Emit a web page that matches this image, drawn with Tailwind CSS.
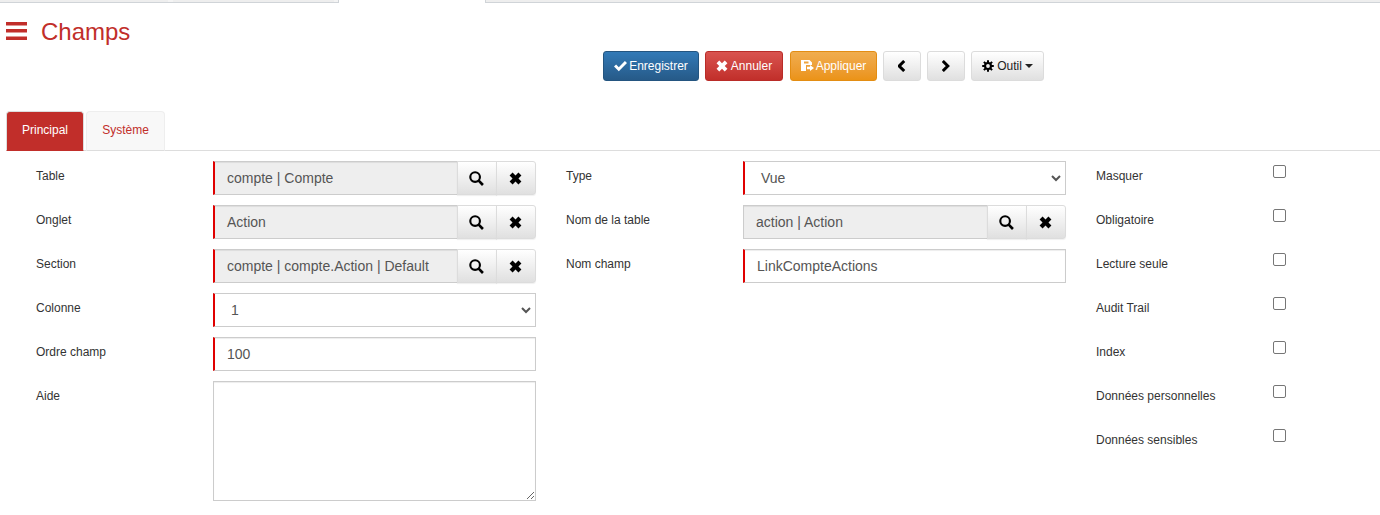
<!DOCTYPE html>
<html lang="fr">
<head>
  <meta charset="UTF-8" />
  <title>Champs</title>
  <script src="https://cdn.jsdelivr.net/npm/@tailwindcss/browser@4"></script>
</head>
<body class="bg-white font-['Liberation_Sans',Arial,sans-serif] text-[12px] text-[#333] h-[515px] overflow-hidden">
  <!-- onglets du navigateur -->
  <div class="h-[3px] flex">
    <div class="w-[168px] bg-[#eeeeee] border-b border-[#d0d4d8]"></div>
    <div class="w-[5px] bg-[#f4f4f4] border-b border-[#d0d4d8]"></div>
    <div class="w-[161px] bg-[#eeeeee] border-b border-[#d0d4d8]"></div>
    <div class="w-[5px] bg-[#f4f4f4] border-b border-r border-[#d0d4d8]"></div>
    <div class="w-[146px]"></div>
    <div class="flex-1 bg-[#eeeeee] border-b border-l border-[#d0d4d8]"></div>
  </div>

  <!-- titre -->
  <div class="h-[48px] flex items-start pl-[6px] pt-[19px]">
    <svg class="w-[21px] h-[18px] fill-[#c12e2a]" viewBox="0 0 21 18"><rect width="21" height="3.5"/><rect y="7" width="21" height="3.5"/><rect y="14.5" width="21" height="3.5"/></svg>
    <h1 class="ml-[14px] text-[24px] leading-[26px] text-[#c12e2a] -mt-[3px]">Champs</h1>
  </div>

  <!-- barre d'actions -->
  <div class="h-[30px] flex pl-[603px]">
    <button class="w-[96px] h-[30px] rounded-[3px] border border-[#245580] bg-gradient-to-b from-[#337ab7] to-[#265a88] text-white flex items-center justify-center gap-[2px]">
      <svg class="w-[13px] h-[12px] fill-white" viewBox="0 0 13 12"><path d="M0 6.6 L2.1 4.5 L4.8 7.2 L10.9 1 L13 3.1 L4.8 11.3 Z"/></svg>Enregistrer
    </button>
    <button class="w-[78px] h-[30px] ml-[6px] rounded-[3px] border border-[#b92c28] bg-gradient-to-b from-[#d9534f] to-[#c12e2a] text-white flex items-center justify-center gap-[3px]">
      <svg class="w-[12px] h-[12px] fill-white" viewBox="0 0 11 11"><path d="M0.5 3 L3 0.5 L5.5 3 L8 0.5 L10.5 3 L8 5.5 L10.5 8 L8 10.5 L5.5 8 L3 10.5 L0.5 8 L3 5.5 Z"/></svg>Annuler
    </button>
    <button class="w-[87px] h-[30px] ml-[7px] rounded-[3px] border border-[#e38d13] bg-gradient-to-b from-[#f0ad4e] to-[#eb9316] text-white flex items-center justify-center gap-[2px]">
      <svg class="w-[13px] h-[12px] fill-white" viewBox="0 0 13 12"><path fill-rule="evenodd" d="M0 0 H8.5 L11 2.5 V5 H5 V11 H0 Z M3 1.5 V3.5 H7.5 V1.5 Z"/><path d="M6 6.8 H9 V5 L13 8 L9 11 V9.2 H6 Z"/></svg>Appliquer
    </button>
    <button class="w-[38px] h-[30px] ml-[6px] rounded-[3px] border border-[#dcdcdc] bg-gradient-to-b from-white to-[#e0e0e0] flex items-center justify-center">
      <svg class="w-[9px] h-[12px] fill-none stroke-black stroke-[3]" viewBox="0 0 9 12"><path d="M6.2 1 L1.2 6 L6.2 11"/></svg>
    </button>
    <button class="w-[38px] h-[30px] ml-[6px] rounded-[3px] border border-[#dcdcdc] bg-gradient-to-b from-white to-[#e0e0e0] flex items-center justify-center">
      <svg class="w-[9px] h-[12px] fill-none stroke-black stroke-[3]" viewBox="0 0 9 12"><path d="M0.8 1 L5.8 6 L0.8 11"/></svg>
    </button>
    <button class="w-[73px] h-[30px] ml-[6px] rounded-[3px] border border-[#dcdcdc] bg-gradient-to-b from-white to-[#e0e0e0] text-[#222] flex items-center justify-center gap-[3px]">
      <svg class="w-[12px] h-[12px]" viewBox="0 0 12 12"><path d="M6 0.2 V11.8 M0.2 6 H11.8 M1.9 1.9 L10.1 10.1 M10.1 1.9 L1.9 10.1" stroke="#000" stroke-width="2"/><circle cx="6" cy="6" r="4" fill="#000"/><circle cx="6" cy="6" r="1.9" fill="#efefef"/></svg>
      Outil
      <span class="w-0 h-0 border-x-[4px] border-x-transparent border-t-[4px] border-t-[#222]"></span>
    </button>
  </div>

  <!-- onglets -->
  <div class="mt-[30px] h-[40px] ml-[6px] flex items-end gap-[2px] border-b border-[#dddddd] -mb-px">
    <a class="w-[78px] h-[40px] -mb-px pb-[3px] rounded-t-[4px] bg-[#c12e2a] border border-[#dddddd] border-b-[#c12e2a] text-white flex items-center justify-center">Principal</a>
    <a class="w-[79px] h-[40px] -mb-px pb-[3px] rounded-t-[4px] bg-[#f8f8f8] border border-[#eeeeee] border-b-[#dddddd] text-[#c12e2a] flex items-center justify-center">Système</a>
  </div>

  <!-- formulaire -->
  <div class="flex pt-[11px]">
    <div class="w-[566px] pl-[36px] flex flex-col gap-[10px] shrink-0">
      <div class="flex">
        <label class="w-[177px] pt-[8px] leading-[14px]">Table</label>
        <div class="w-[323px] h-[34px] flex">
          <div class="flex-1 min-w-0 h-[34px] px-[12px] bg-[#eeeeee] border border-[#cccccc] border-l-[2px] border-l-[#e00000] text-[14px] leading-[32px] text-[#555] shadow-[inset_0_1px_1px_rgba(0,0,0,0.075)]">compte | Compte</div>
          <button class="w-[40px] h-[34px] -ml-px border border-[#dcdcdc] bg-gradient-to-b from-white to-[#e0e0e0] shadow-[0_1px_1px_rgba(0,0,0,0.06)] flex items-center justify-center">
            <svg class="w-[15px] h-[15px] fill-none stroke-black -ml-[1px]" viewBox="0 0 14 14"><circle cx="5.7" cy="5.7" r="4.5" stroke-width="2"/><path d="M9 9 L13 13" stroke-width="2.5"/></svg>
          </button>
          <button class="w-[40px] h-[34px] -ml-px border border-[#dcdcdc] rounded-r-[3px] bg-gradient-to-b from-white to-[#e0e0e0] shadow-[0_1px_1px_rgba(0,0,0,0.06)] flex items-center justify-center">
            <svg class="w-[13px] h-[13px] fill-black -ml-[1px]" viewBox="0 0 11 11"><path d="M0.5 3 L3 0.5 L5.5 3 L8 0.5 L10.5 3 L8 5.5 L10.5 8 L8 10.5 L5.5 8 L3 10.5 L0.5 8 L3 5.5 Z"/></svg>
          </button>
        </div>
      </div>
      <div class="flex">
        <label class="w-[177px] pt-[8px] leading-[14px]">Onglet</label>
        <div class="w-[323px] h-[34px] flex">
          <div class="flex-1 min-w-0 h-[34px] px-[12px] bg-[#eeeeee] border border-[#cccccc] border-l-[2px] border-l-[#e00000] text-[14px] leading-[32px] text-[#555] shadow-[inset_0_1px_1px_rgba(0,0,0,0.075)]">Action</div>
          <button class="w-[40px] h-[34px] -ml-px border border-[#dcdcdc] bg-gradient-to-b from-white to-[#e0e0e0] shadow-[0_1px_1px_rgba(0,0,0,0.06)] flex items-center justify-center">
            <svg class="w-[15px] h-[15px] fill-none stroke-black -ml-[1px]" viewBox="0 0 14 14"><circle cx="5.7" cy="5.7" r="4.5" stroke-width="2"/><path d="M9 9 L13 13" stroke-width="2.5"/></svg>
          </button>
          <button class="w-[40px] h-[34px] -ml-px border border-[#dcdcdc] rounded-r-[3px] bg-gradient-to-b from-white to-[#e0e0e0] shadow-[0_1px_1px_rgba(0,0,0,0.06)] flex items-center justify-center">
            <svg class="w-[13px] h-[13px] fill-black -ml-[1px]" viewBox="0 0 11 11"><path d="M0.5 3 L3 0.5 L5.5 3 L8 0.5 L10.5 3 L8 5.5 L10.5 8 L8 10.5 L5.5 8 L3 10.5 L0.5 8 L3 5.5 Z"/></svg>
          </button>
        </div>
      </div>
      <div class="flex">
        <label class="w-[177px] pt-[8px] leading-[14px]">Section</label>
        <div class="w-[323px] h-[34px] flex">
          <div class="flex-1 min-w-0 h-[34px] px-[12px] bg-[#eeeeee] border border-[#cccccc] border-l-[2px] border-l-[#e00000] text-[14px] leading-[32px] text-[#555] whitespace-nowrap overflow-hidden shadow-[inset_0_1px_1px_rgba(0,0,0,0.075)]">compte | compte.Action | Default</div>
          <button class="w-[40px] h-[34px] -ml-px border border-[#dcdcdc] bg-gradient-to-b from-white to-[#e0e0e0] shadow-[0_1px_1px_rgba(0,0,0,0.06)] flex items-center justify-center">
            <svg class="w-[15px] h-[15px] fill-none stroke-black -ml-[1px]" viewBox="0 0 14 14"><circle cx="5.7" cy="5.7" r="4.5" stroke-width="2"/><path d="M9 9 L13 13" stroke-width="2.5"/></svg>
          </button>
          <button class="w-[40px] h-[34px] -ml-px border border-[#dcdcdc] rounded-r-[3px] bg-gradient-to-b from-white to-[#e0e0e0] shadow-[0_1px_1px_rgba(0,0,0,0.06)] flex items-center justify-center">
            <svg class="w-[13px] h-[13px] fill-black -ml-[1px]" viewBox="0 0 11 11"><path d="M0.5 3 L3 0.5 L5.5 3 L8 0.5 L10.5 3 L8 5.5 L10.5 8 L8 10.5 L5.5 8 L3 10.5 L0.5 8 L3 5.5 Z"/></svg>
          </button>
        </div>
      </div>
      <div class="flex">
        <label class="w-[177px] pt-[8px] leading-[14px]">Colonne</label>
        <div class="w-[323px] h-[34px] pl-[16px] pr-[4px] flex items-center justify-between bg-white border border-[#cccccc] border-l-[2px] border-l-[#e00000] text-[14px] text-[#555]">
          1
          <svg class="w-[10px] h-[7px] fill-none stroke-[#555] stroke-[2]" viewBox="0 0 10 7"><path d="M1 1 L5 5 L9 1"/></svg>
        </div>
      </div>
      <div class="flex">
        <label class="w-[177px] pt-[8px] leading-[14px]">Ordre champ</label>
        <div class="w-[323px] h-[34px] px-[12px] bg-white border border-[#cccccc] border-l-[2px] border-l-[#e00000] text-[14px] leading-[32px] text-[#555] shadow-[inset_0_1px_1px_rgba(0,0,0,0.075)]">100</div>
      </div>
      <div class="flex">
        <label class="w-[177px] pt-[8px] leading-[14px]">Aide</label>
        <textarea class="w-[323px] h-[120px] block bg-white border border-[#cccccc] shadow-[inset_0_1px_1px_rgba(0,0,0,0.075)]"></textarea>
      </div>
    </div>

    <div class="w-[530px] flex flex-col gap-[10px] shrink-0">
      <div class="flex">
        <label class="w-[177px] pt-[8px] leading-[14px]">Type</label>
        <div class="w-[323px] h-[34px] pl-[16px] pr-[4px] flex items-center justify-between bg-white border border-[#cccccc] border-l-[2px] border-l-[#e00000] text-[14px] text-[#555]">
          Vue
          <svg class="w-[10px] h-[7px] fill-none stroke-[#555] stroke-[2]" viewBox="0 0 10 7"><path d="M1 1 L5 5 L9 1"/></svg>
        </div>
      </div>
      <div class="flex">
        <label class="w-[177px] pt-[8px] leading-[14px]">Nom de la table</label>
        <div class="w-[323px] h-[34px] flex">
          <div class="flex-1 min-w-0 h-[34px] px-[12px] bg-[#eeeeee] border border-[#cccccc] text-[14px] leading-[32px] text-[#555] shadow-[inset_0_1px_1px_rgba(0,0,0,0.075)]">action | Action</div>
          <button class="w-[40px] h-[34px] -ml-px border border-[#dcdcdc] bg-gradient-to-b from-white to-[#e0e0e0] shadow-[0_1px_1px_rgba(0,0,0,0.06)] flex items-center justify-center">
            <svg class="w-[15px] h-[15px] fill-none stroke-black -ml-[1px]" viewBox="0 0 14 14"><circle cx="5.7" cy="5.7" r="4.5" stroke-width="2"/><path d="M9 9 L13 13" stroke-width="2.5"/></svg>
          </button>
          <button class="w-[40px] h-[34px] -ml-px border border-[#dcdcdc] rounded-r-[3px] bg-gradient-to-b from-white to-[#e0e0e0] shadow-[0_1px_1px_rgba(0,0,0,0.06)] flex items-center justify-center">
            <svg class="w-[13px] h-[13px] fill-black -ml-[1px]" viewBox="0 0 11 11"><path d="M0.5 3 L3 0.5 L5.5 3 L8 0.5 L10.5 3 L8 5.5 L10.5 8 L8 10.5 L5.5 8 L3 10.5 L0.5 8 L3 5.5 Z"/></svg>
          </button>
        </div>
      </div>
      <div class="flex">
        <label class="w-[177px] pt-[8px] leading-[14px]">Nom champ</label>
        <div class="w-[323px] h-[34px] px-[12px] bg-white border border-[#cccccc] border-l-[2px] border-l-[#e00000] text-[14px] leading-[32px] text-[#555] shadow-[inset_0_1px_1px_rgba(0,0,0,0.075)]">LinkCompteActions</div>
      </div>
    </div>

    <div class="flex-1 flex flex-col gap-[30px]">
      <div class="flex h-[14px] mt-[8px]"><label class="w-[177px] leading-[14px]">Masquer</label><input type="checkbox" class="w-[13px] h-[13px] -mt-[4px] appearance-none border border-[#767676] rounded-[2px] bg-white" /></div>
      <div class="flex h-[14px]"><label class="w-[177px] leading-[14px]">Obligatoire</label><input type="checkbox" class="w-[13px] h-[13px] -mt-[4px] appearance-none border border-[#767676] rounded-[2px] bg-white" /></div>
      <div class="flex h-[14px]"><label class="w-[177px] leading-[14px]">Lecture seule</label><input type="checkbox" class="w-[13px] h-[13px] -mt-[4px] appearance-none border border-[#767676] rounded-[2px] bg-white" /></div>
      <div class="flex h-[14px]"><label class="w-[177px] leading-[14px]">Audit Trail</label><input type="checkbox" class="w-[13px] h-[13px] -mt-[4px] appearance-none border border-[#767676] rounded-[2px] bg-white" /></div>
      <div class="flex h-[14px]"><label class="w-[177px] leading-[14px]">Index</label><input type="checkbox" class="w-[13px] h-[13px] -mt-[4px] appearance-none border border-[#767676] rounded-[2px] bg-white" /></div>
      <div class="flex h-[14px]"><label class="w-[177px] leading-[14px]">Données personnelles</label><input type="checkbox" class="w-[13px] h-[13px] -mt-[4px] appearance-none border border-[#767676] rounded-[2px] bg-white" /></div>
      <div class="flex h-[14px]"><label class="w-[177px] leading-[14px]">Données sensibles</label><input type="checkbox" class="w-[13px] h-[13px] -mt-[4px] appearance-none border border-[#767676] rounded-[2px] bg-white" /></div>
    </div>
  </div>
</body>
</html>
